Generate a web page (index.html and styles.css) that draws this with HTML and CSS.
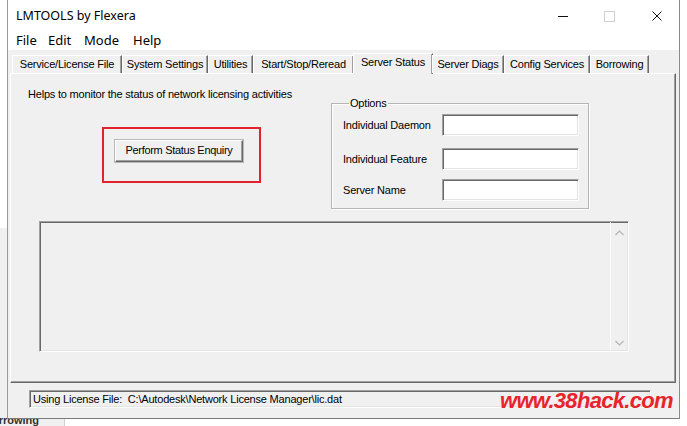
FILE: index.html
```html
<!DOCTYPE html>
<html>
<head>
<meta charset="utf-8">
<link rel="stylesheet" href="styles.css">
</head>
<body>
<div class="desk">
  <div class="backwin">
    <span class="back-tab">Borrowing</span>
  </div>
  <div class="window">
    <div class="titlebar">
      <span class="title">LMTOOLS by Flexera</span>
      <div class="controls">
        <span class="ctl ctl-min"></span>
        <span class="ctl ctl-max"></span>
        <span class="ctl ctl-close">
          <svg width="10" height="10" viewBox="0 0 10 10"><path d="M0.5 0.5 L9.5 9.5 M9.5 0.5 L0.5 9.5" stroke="#111" stroke-width="1" fill="none"/></svg>
        </span>
      </div>
    </div>
    <div class="menubar">
      <span class="menu m-file">File</span>
      <span class="menu m-edit">Edit</span>
      <span class="menu m-mode">Mode</span>
      <span class="menu m-help">Help</span>
    </div>
    <div class="tabstrip">
      <span class="tab t1">Service/License File</span>
      <span class="tab t2">System Settings</span>
      <span class="tab t3">Utilities</span>
      <span class="tab t4">Start/Stop/Reread</span>
      <span class="tab t5 active">Server Status</span>
      <span class="tab t6">Server Diags</span>
      <span class="tab t7">Config Services</span>
      <span class="tab t8">Borrowing</span>
    </div>
    <div class="panel">
      <div class="toprow">
        <div class="leftcol">
          <div class="desc">Helps to monitor the status of network licensing activities</div>
          <div class="highlight">
            <div class="button">Perform Status Enquiry</div>
          </div>
        </div>
        <fieldset class="group">
          <legend>Options</legend>
          <div class="frow r1"><span class="flabel">Individual Daemon</span><span class="field"></span></div>
          <div class="frow r2"><span class="flabel">Individual Feature</span><span class="field"></span></div>
          <div class="frow r3"><span class="flabel">Server Name</span><span class="field"></span></div>
        </fieldset>
      </div>
      <div class="output">
        <div class="scroll">
          <svg class="arrow" width="9" height="6" viewBox="0 0 9 6"><path d="M0.5 5 L4.5 1 L8.5 5" stroke="#b4b4b4" stroke-width="1.2" fill="none"/></svg>
          <svg class="arrow" width="9" height="6" viewBox="0 0 9 6"><path d="M0.5 1 L4.5 5 L8.5 1" stroke="#b4b4b4" stroke-width="1.2" fill="none"/></svg>
        </div>
      </div>
    </div>
    <div class="statusrow">
      <div class="status">Using License File:  C:\Autodesk\Network License Manager\lic.dat</div>
      <span class="watermark">www.38hack.com</span>
    </div>
  </div>
</div>
</body>
</html>
```
FILE: styles.css
```css
html, body {
  margin: 0;
  padding: 0;
}
body {
  width: 687px;
  height: 426px;
  overflow: hidden;
  background: #ffffff;
  font-family: "Liberation Sans", Arial, sans-serif;
  font-size: 11px;
  letter-spacing: -0.2px;
  color: #000;
}
.desk {
  position: relative;
  width: 687px;
  height: 426px;
}
.backwin {
  position: absolute;
  left: 0;
  top: 228px;
  width: 64px;
  height: 198px;
  background: #f0f0f0;
  border-right: 1px solid #d0d0d0;
}
.back-tab {
  position: absolute;
  left: -16px;
  top: 186px;
  font-size: 11px;
  font-weight: bold;
  color: #333;
  letter-spacing: 0;
}
.window {
  position: absolute;
  left: 7px;
  top: 0;
  width: 671px;
  height: 418px;
  background: #f0f0f0;
  border-left: 1px solid #9a9a9a;
  border-right: 1px solid #8a8a8a;
  border-bottom: 1px solid #7a7a7a;
  display: flex;
  flex-direction: column;
}
.titlebar {
  height: 30px;
  background: #fff;
  display: flex;
  align-items: center;
  padding-left: 8px;
  font-family: "Noto Sans", "Open Sans", sans-serif;
  font-size: 12.5px;
  letter-spacing: 0;
}
.title {
  margin-top: 1px;
}
.controls {
  margin-left: auto;
  display: flex;
  align-items: center;
  height: 30px;
}
.ctl {
  display: block;
  position: relative;
}
.ctl-min {
  width: 10px;
  height: 1px;
  background: #111;
  margin-top: 2px;
}
.ctl-max {
  width: 9px;
  height: 9px;
  border: 1px solid #cfcfcf;
  margin-left: 36px;
  margin-top: 2px;
}
.ctl-close {
  width: 10px;
  height: 10px;
  margin-left: 37px;
  margin-right: 17px;
  margin-top: 2px;
}
.ctl-close svg { display: block; }
.menubar {
  height: 20px;
  background: #fff;
  font-family: "Noto Sans", "Open Sans", sans-serif;
  font-size: 13px;
  letter-spacing: 0;
  position: relative;
}
.menu {
  position: absolute;
  top: 1px;
}
.m-file { left: 8px; }
.m-edit { left: 40px; }
.m-mode { left: 76px; }
.m-help { left: 125px; }
.tabstrip {
  height: 23px;
  display: flex;
  align-items: flex-end;
  padding-left: 4px;
  position: relative;
  z-index: 2;
}
.tab {
  box-sizing: border-box;
  height: 18px;
  border-top: 1px solid #fff;
  border-left: 1px solid #fff;
  border-right: 1px solid #696969;
  box-shadow: inset -1px 0 0 #a0a0a0;
  text-align: center;
  line-height: 17px;
  background: #f0f0f0;
  white-space: nowrap;
}
.t1 { width: 110px; }
.t2 { width: 86px; }
.t3 { width: 45px; }
.t4 { width: 101px; }
.t6 { width: 72px; }
.t7 { width: 86px; }
.t8 { width: 59px; }
.tab.active {
  height: 21px;
  margin-bottom: -1px;
  margin-left: -1px;
  margin-right: -1px;
  width: 80px;
  line-height: 17px;
}
.panel {
  box-sizing: border-box;
  margin-left: 2px;
  width: 666px;
  height: 310px;
  border-top: 1px solid #fff;
  border-left: 1px solid #fff;
  border-right: 1px solid #696969;
  border-bottom: 1px solid #696969;
  box-shadow: inset -1px -1px 0 #a0a0a0;
  position: relative;
  z-index: 1;
}
.toprow {
  display: flex;
  align-items: flex-start;
}
.leftcol {
  padding-left: 17px;
  padding-top: 13px;
  width: 286px;
}
.desc {
  line-height: 14px;
  white-space: nowrap;
}
.highlight {
  box-sizing: border-box;
  margin-top: 26px;
  margin-left: 74px;
  width: 159px;
  height: 56px;
  border: 2px solid #e3232b;
  padding: 11px 0 0 11px;
}
.button {
  box-sizing: border-box;
  width: 128px;
  height: 22px;
  background: #f0f0f0;
  border-top: 1px solid #fff;
  border-left: 1px solid #fff;
  border-right: 1px solid #696969;
  border-bottom: 1px solid #696969;
  box-shadow: inset -1px -1px 0 #a0a0a0, 0 0 0 1px #b8b8b8;
  text-align: center;
  line-height: 19px;
  letter-spacing: -0.3px;
}
.group {
  box-sizing: border-box;
  margin: 23px 0 0 17px;
  padding: 0 0 0 11px;
  width: 258px;
  height: 112px;
  border: 1px solid #b5b5b5;
  box-shadow: inset 1px 1px 0 #fff, 1px 1px 0 #fff;
  min-width: 0;
}
.group legend {
  padding: 0 1px;
  margin-left: 6px;
  line-height: 13px;
}
.frow {
  display: flex;
  align-items: center;
  height: 22px;
}
.r1 { margin-top: 4px; }
.r2 { margin-top: 12px; }
.r3 { margin-top: 9px; }
.flabel {
  width: 99px;
  white-space: nowrap;
}
.field {
  box-sizing: border-box;
  width: 137px;
  height: 22px;
  background: #fff;
  border-top: 1px solid #a0a0a0;
  border-left: 1px solid #a0a0a0;
  border-right: 1px solid #fff;
  border-bottom: 1px solid #fff;
  box-shadow: inset 1px 1px 0 #696969, inset -1px -1px 0 #e3e3e3;
}
.output {
  box-sizing: border-box;
  margin: 12px 0 0 28px;
  width: 590px;
  height: 131px;
  border-top: 1px solid #a0a0a0;
  border-left: 1px solid #a0a0a0;
  border-right: 1px solid #fff;
  border-bottom: 1px solid #fff;
  box-shadow: inset 1px 1px 0 #696969, inset -1px -1px 0 #e3e3e3;
  display: flex;
  justify-content: flex-end;
}
.scroll {
  box-sizing: border-box;
  width: 17px;
  height: 100%;
  border-left: 1px solid #fbfbfb;
  margin-right: 1px;
  display: flex;
  flex-direction: column;
  justify-content: space-between;
  align-items: center;
  padding: 8px 0 5px 1px;
}
.arrow { display: block; }
.statusrow {
  position: relative;
  margin-top: 7px;
  height: 18px;
}
.status {
  box-sizing: border-box;
  margin-left: 21px;
  width: 622px;
  height: 18px;
  border-top: 1px solid #a0a0a0;
  border-left: 1px solid #a0a0a0;
  border-right: 1px solid #fff;
  border-bottom: 1px solid #fff;
  box-shadow: inset 1px 1px 0 #696969, inset -1px -1px 0 #e3e3e3;
  white-space: pre;
  line-height: 16px;
  padding-left: 3px;
}
.watermark {
  position: absolute;
  left: 492px;
  top: -2px;
  font-family: "Liberation Sans Narrow", "Liberation Sans", sans-serif;
  font-weight: bold;
  font-style: italic;
  font-size: 22px;
  color: #e8232b;
  white-space: nowrap;
  letter-spacing: -0.7px;
}
```
